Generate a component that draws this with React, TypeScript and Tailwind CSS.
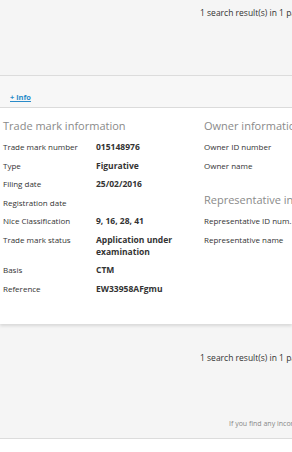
import React from "react";

interface Row {
  label: string;
  value?: string;
}

const tmRows: Row[] = [
  { label: "Trade mark number", value: "015148976" },
  { label: "Type", value: "Figurative" },
  { label: "Filing date", value: "25/02/2016" },
  { label: "Registration date" },
  { label: "Nice Classification", value: "9, 16, 28, 41" },
  { label: "Trade mark status", value: "Application under examination" },
  { label: "Basis", value: "CTM" },
  { label: "Reference", value: "EW33958AFgmu" },
];

const font = { fontFamily: "'Open Sans', 'Liberation Sans', sans-serif" };

export default function App() {
  return (
    <div
      className="w-[292px] h-[452px] overflow-hidden bg-white text-[#333]"
      style={font}
    >
      <div className="h-[75px] bg-[#f5f5f5] pl-[200px] pt-[7px] whitespace-nowrap text-[8.5px] leading-[12px]">
        1 search result(s) in 1 page
      </div>

      <div className="h-[33px] bg-[#f7f7f7] border-y border-[#dcdcdc] pl-[10px] pt-[13px] leading-[10px]">
        <a className="text-[7.5px] font-bold text-[#2a8bc9] underline leading-[10px]">+ info</a>
      </div>

      <div className="h-[216px] bg-white flex shadow-[0_2px_3px_rgba(0,0,0,0.12)] relative">
        <div className="w-[201px] shrink-0 pl-[3px] pt-[10px]">
          <h2 className="text-[11px] text-[#8a8a8a] leading-[16px] mb-[6px] whitespace-nowrap">
            Trade mark information
          </h2>
          {tmRows.map((row, idx) => (
            <div key={idx} className="flex leading-[12px] pt-[1px] pb-[5.5px]">
              <span className="w-[93px] shrink-0 whitespace-nowrap text-[8px]">{row.label}</span>
              <span className="font-bold w-[100px] text-[8.5px]">{row.value}</span>
            </div>
          ))}
        </div>
        <div className="pl-[3px] pt-[10px] whitespace-nowrap">
          <h2 className="text-[11px] text-[#8a8a8a] leading-[16px] mb-[6px]">
            Owner information
          </h2>
          <div className="text-[8px] leading-[12px] h-[18.5px] pt-[1px]">Owner ID number</div>
          <div className="text-[8px] leading-[12px] h-[18.5px] pt-[1px]">Owner name</div>
          <h2 className="text-[11px] text-[#8a8a8a] leading-[16px] mt-[15px] mb-[6px]">
            Representative information
          </h2>
          <div className="text-[8px] leading-[12px] h-[18.5px] pt-[1px]">Representative ID num...</div>
          <div className="text-[8px] leading-[12px] h-[18.5px] pt-[1px]">Representative name</div>
        </div>
      </div>

      <div className="h-[115px] bg-[#f5f5f5] border-b border-[#dcdcdc] flex flex-col">
        <div className="pl-[200px] pt-[28px] whitespace-nowrap text-[8.5px] leading-[12px]">
          1 search result(s) in 1 page
        </div>
        <div className="pl-[229px] mt-auto mb-[9px] whitespace-nowrap text-[7px] text-[#888]">
          If you find any incorrect data
        </div>
      </div>
    </div>
  );
}
